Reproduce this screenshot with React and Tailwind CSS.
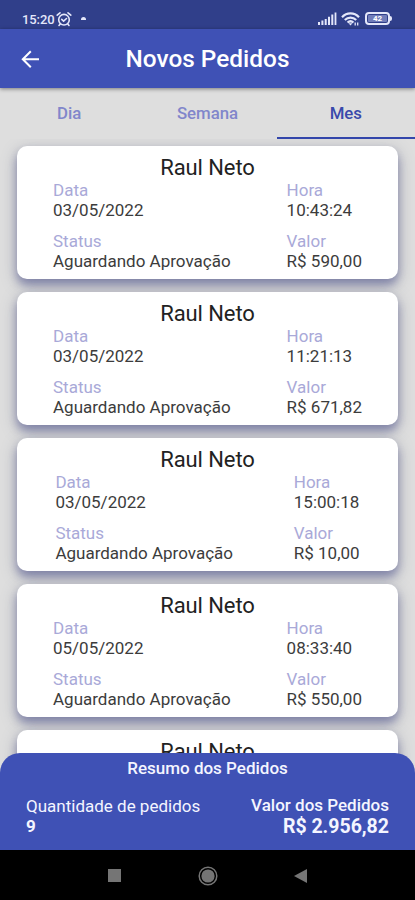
const pedidos = [
    { id: 1, nome: 'Raul Neto', data: '03/05/2022', hora: '10:43:24', status: 'Aguardando Aprovação', valor: 'R$ 590,00' },
    { id: 2, nome: 'Raul Neto', data: '03/05/2022', hora: '11:21:13', status: 'Aguardando Aprovação', valor: 'R$ 671,82' },
    { id: 3, nome: 'Raul Neto', data: '03/05/2022', hora: '15:00:18', status: 'Aguardando Aprovação', valor: 'R$ 10,00' },
    { id: 4, nome: 'Raul Neto', data: '05/05/2022', hora: '08:33:40', status: 'Aguardando Aprovação', valor: 'R$ 550,00' },
    { id: 5, nome: 'Raul Neto' },
];

export default function App() {
    return (
        <div className="flex h-[900px] w-full flex-col overflow-hidden bg-[#dedede] font-['Roboto',sans-serif]">
            <StatusBar />

            <header className="z-10 flex h-[59px] shrink-0 items-center bg-[#3f51b5] px-5 text-white shadow-[0_1px_4px_rgba(0,0,0,0.45)]">
                <button type="button" aria-label="Voltar">
                    <svg width="20" height="20" viewBox="0 0 20 20" fill="none" stroke="currentColor" strokeWidth="2">
                        <path d="M19 10.2H3M10.8 2.2l-8 8 8 8" />
                    </svg>
                </button>
                <h1 className="flex-1 pr-5 pt-[2px] text-center text-[24.4px] font-medium">
                    Novos Pedidos
                </h1>
            </header>

            <nav className="grid h-[51px] shrink-0 grid-cols-3 text-[16.8px] font-medium">
                <Tab label="Dia" />
                <Tab label="Semana" />
                <Tab label="Mes" active />
            </nav>

            <main className="min-h-0 flex-1 overflow-hidden px-[17px] pt-[7px]">
                <div className="flex flex-col gap-[13px]">
                    {pedidos.map((pedido) => (
                        <PedidoCard key={pedido.id} pedido={pedido} />
                    ))}
                </div>
            </main>

            <Resumo />
            <NavigationBar />
        </div>
    );
}

function StatusBar() {
    return (
        <div className="flex h-[29px] shrink-0 items-center bg-[#303f8a] pl-[22px] pr-[23px] pt-[8px] text-[#e4e7fa]">
            <span className="pt-px text-[13px] font-medium leading-none tracking-[-0.1px]">
                15:20
            </span>

            <svg className="ml-[2px]" width="16" height="16" viewBox="0 0 16 16" fill="none" stroke="currentColor" strokeWidth="1.6" strokeLinecap="round">
                <circle cx="8" cy="8.7" r="5.3" />
                <path d="M5.7 8.4l1.9 1.7 2.9-2.6M1.2 4.2 4 1.8M14.8 4.2 12 1.8M4.2 13l-1.2 1.4M11.8 13l1.2 1.4" />
            </svg>

            <span className="ml-[9px] h-[3px] w-[5px] rounded-t-sm bg-current" />

            <div className="ml-auto flex items-center gap-[4px]">
                <svg width="19" height="13" viewBox="0 0 19 13" fill="currentColor">
                    <path d="M0 10h2v3H0zM3.4 8.5h2V13h-2zM6.7 7h2v6h-2zM10 4.8h2V13h-2zM13.3 2.6h2V13h-2zM16.6.5h1.8V13h-1.8z" />
                </svg>
                <svg width="19" height="14" viewBox="0 0 19 14" fill="none" stroke="currentColor" strokeWidth="2.2">
                    <path d="M1 5.2C5.8.2 13.2.2 18 5.2M3.8 8c3.3-3.2 8.1-3.2 11.4 0M6.5 10.5c1.8-1.5 4.2-1.5 6 0" />
                    <path d="M7.5 11.2h4L9.5 13.6z" fill="currentColor" stroke="none" />
                    <path d="M14.2 10.5v3M16.7 10.5v3" strokeWidth="1.3" />
                </svg>
                <span className="ml-px flex items-center">
                    <span className="flex h-[13px] w-[25px] items-center justify-center rounded-[4px] border-2 border-current p-px">
                        <span className="flex h-[7px] w-full items-center justify-center rounded-[1px] bg-[#717dba] text-[8px] font-bold leading-none text-white">
                            42
                        </span>
                    </span>
                    <span className="h-[5px] w-[2px] rounded-r-sm bg-current" />
                </span>
            </div>
        </div>
    );
}

function Tab({ label, active }) {
    return (
        <button
            type="button"
            className={`flex items-center justify-center border-b-2 pt-[2px] ${
                active
                    ? 'border-[#3346ab] text-[#3949ab]'
                    : 'border-transparent text-[#8186cb]'
            }`}
        >
            {label}
        </button>
    );
}

function PedidoCard({ pedido }) {
    return (
        <article className="h-[133px] shrink-0 rounded-[10px] bg-white px-[8px] pt-[9px] shadow-[0_6px_8px_rgba(63,68,140,0.4),0_5px_16px_rgba(75,80,110,0.4)]">
            <h2 className="h-[25px] text-center text-[22px] leading-[26px] tracking-[-0.1px] text-[#222]">
                {pedido.nome}
            </h2>

            {/* colunas com espaço distribuído conforme a largura do conteúdo */}
            {pedido.data && (
                <div className="flex justify-around">
                    <div className="flex flex-col gap-[11px]">
                        <Campo label="Data" value={pedido.data} />
                        <Campo label="Status" value={pedido.status} />
                    </div>
                    <div className="flex flex-col gap-[11px]">
                        <Campo label="Hora" value={pedido.hora} />
                        <Campo label="Valor" value={pedido.valor} />
                    </div>
                </div>
            )}
        </article>
    );
}

function Campo({ label, value }) {
    return (
        <div className="text-[17px] leading-[20px]">
            <p className="text-[#a9a9d8]">{label}</p>
            <p className="text-[#3c3c3c]">{value}</p>
        </div>
    );
}

function Resumo() {
    return (
        <section className="z-10 -mt-5 h-[97px] shrink-0 rounded-t-[20px] bg-[#3f51b5] px-[26px] pt-[5px] text-[#f4f5ff]">
            <h2 className="text-center text-[17px] font-medium leading-[20px]">
                Resumo dos Pedidos
            </h2>

            <div className="mt-[16px] flex justify-between">
                <div className="pt-[2px] leading-[20px]">
                    <p className="text-[17px]">
                        Quantidade de pedidos
                    </p>
                    <p className="text-[17px] font-bold">9</p>
                </div>
                <div className="pt-px text-right">
                    <p className="text-[17px] font-medium leading-[20px]">
                        Valor dos Pedidos
                    </p>
                    <p className="text-[19.5px] font-bold leading-[23px]">R$ 2.956,82</p>
                </div>
            </div>
        </section>
    );
}

function NavigationBar() {
    return (
        <div className="flex h-[50px] shrink-0 items-center justify-between bg-black pl-[108px] pr-[108px] pt-px text-[#757575]">
            <span className="h-[13px] w-[13px] bg-current" />
            <svg width="20" height="20" viewBox="0 0 20 20">
                <circle cx="10" cy="10" r="8.8" fill="none" stroke="currentColor" strokeWidth="1.5" />
                <circle cx="10" cy="10" r="6.6" fill="currentColor" />
            </svg>
            <svg width="13" height="14" viewBox="0 0 13 14" fill="currentColor">
                <path d="M13 0v14L0 7z" />
            </svg>
        </div>
    );
}
